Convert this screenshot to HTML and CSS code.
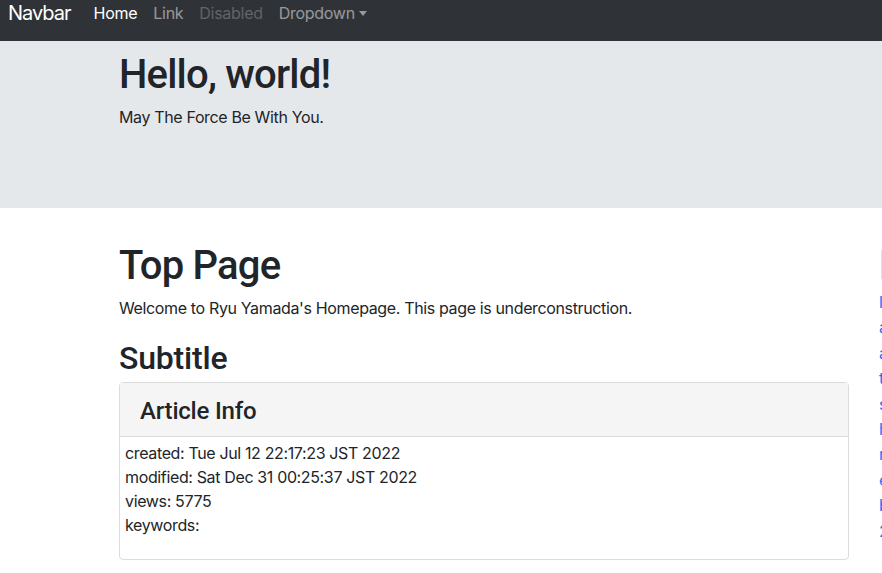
FILE: index.html
```html
<!DOCTYPE html>
<html lang="en">
<head>
<meta charset="utf-8">
<title>Top Page</title>
<link rel="stylesheet" href="styles.css">
</head>
<body>
<div class="page">
  <nav class="navbar">
    <a class="brand" href="#">Navbar</a>
    <ul class="nav">
      <li><a class="nav-link active" href="#">Home</a></li>
      <li><a class="nav-link" href="#">Link</a></li>
      <li><a class="nav-link disabled" href="#">Disabled</a></li>
      <li><a class="nav-link dropdown" href="#">Dropdown</a></li>
    </ul>
  </nav>
  <header class="jumbotron">
    <div class="container">
      <h1 class="h1">Hello, world!</h1>
      <p class="lead">May The Force Be With You.</p>
    </div>
  </header>
  <div class="container">
    <div class="row">
      <main class="main">
        <h1 class="h1">Top Page</h1>
        <p class="text">Welcome to Ryu Yamada's Homepage. This page is underconstruction.</p>
        <h2 class="h2">Subtitle</h2>
        <section class="card">
          <div class="card-header"><h4 class="h4">Article Info</h4></div>
          <div class="card-body">
            <div>created: Tue Jul 12 22:17:23 JST 2022</div>
            <div>modified: Sat Dec 31 00:25:37 JST 2022</div>
            <div>views: 5775</div>
            <div>keywords:</div>
          </div>
        </section>
      </main>
      <aside class="side">
        <h1 class="h1 side-title">Links</h1>
        <ul class="links">
          <li><a href="#">linux</a></li>
          <li><a href="#">android</a></li>
          <li><a href="#">arduino</a></li>
          <li><a href="#">tips</a></li>
          <li><a href="#">swift</a></li>
          <li><a href="#">hugo</a></li>
          <li><a href="#">raspberrypi</a></li>
          <li><a href="#">electronics</a></li>
          <li><a href="#">blog</a></li>
          <li><a href="#">2022</a></li>
        </ul>
      </aside>
    </div>
  </div>
</div>
</body>
</html>
```
FILE: styles.css
```css
html, body {
  margin: 0;
  padding: 0;
  overflow: hidden;
}
body {
  font-family: Inter, "Noto Sans", "Liberation Sans", sans-serif;
  font-size: 16px;
  line-height: 24px;
  letter-spacing: -0.36px;
  color: #212529;
  background: #fff;
}
.page {
  width: 1348px;
}
a {
  text-decoration: none;
}
.navbar {
  display: flex;
  align-items: flex-start;
  height: 41px;
  box-sizing: border-box;
  padding: 1px 8px 0;
  background: #2f3337;
}
.brand {
  color: #fff;
  font-size: 20px;
  line-height: 24px;
  font-weight: 400;
  letter-spacing: -1px;
  margin-right: 23px;
}
.nav {
  display: flex;
  list-style: none;
  margin: 0;
  padding: 0;
}
.nav li {
  margin-right: 16px;
}
.nav-link {
  color: rgba(255, 255, 255, 0.5);
  line-height: 24px;
  letter-spacing: -0.28px;
}
.nav-link.active {
  color: #fff;
}
.nav-link.disabled {
  color: rgba(255, 255, 255, 0.25);
}
.dropdown::after {
  content: "";
  display: inline-block;
  margin-left: 4px;
  vertical-align: 3px;
  border-top: 5px solid;
  border-left: 4px solid transparent;
  border-right: 4px solid transparent;
}
.jumbotron {
  background: #e5e8eb;
  padding: 8px 0 63px;
  margin-bottom: 32px;
}
.container {
  width: 1140px;
  margin: 0 auto;
  padding: 0 15px;
  box-sizing: border-box;
}
.h1, .h2, .h4 {
  font-family: Roboto, Inter, "Liberation Sans", sans-serif;
  font-weight: 500;
  letter-spacing: -0.2px;
}
.h1 {
  font-size: 40px;
  line-height: 48px;
  letter-spacing: -0.8px;
  padding-top: 2px;
  margin: 0 0 6px;
}
.lead, .text {
  margin: 0 0 16px;
}
.h2 {
  font-size: 32px;
  line-height: 38px;
  padding-top: 3px;
  margin: 0 0 5px;
}
.row {
  display: grid;
  grid-template-columns: 730px 1fr;
  column-gap: 30px;
}
.card {
  border: 1px solid #dcdcdc;
  border-radius: 4px;
}
.card-header {
  background: #f5f5f5;
  border-bottom: 1px solid #dcdcdc;
  padding: 14px 20px 11px;
}
.h4 {
  font-size: 24px;
  line-height: 28px;
  margin: 0;
}
.card-body {
  padding: 4px 5px 22px;
}
.side-title {
  color: #555;
  margin-bottom: 0;
}
.links {
  list-style: none;
  margin: 0;
  padding: 0;
}
.links li {
  line-height: 25.4px;
}
.links a {
  color: #007bff;
}
```
